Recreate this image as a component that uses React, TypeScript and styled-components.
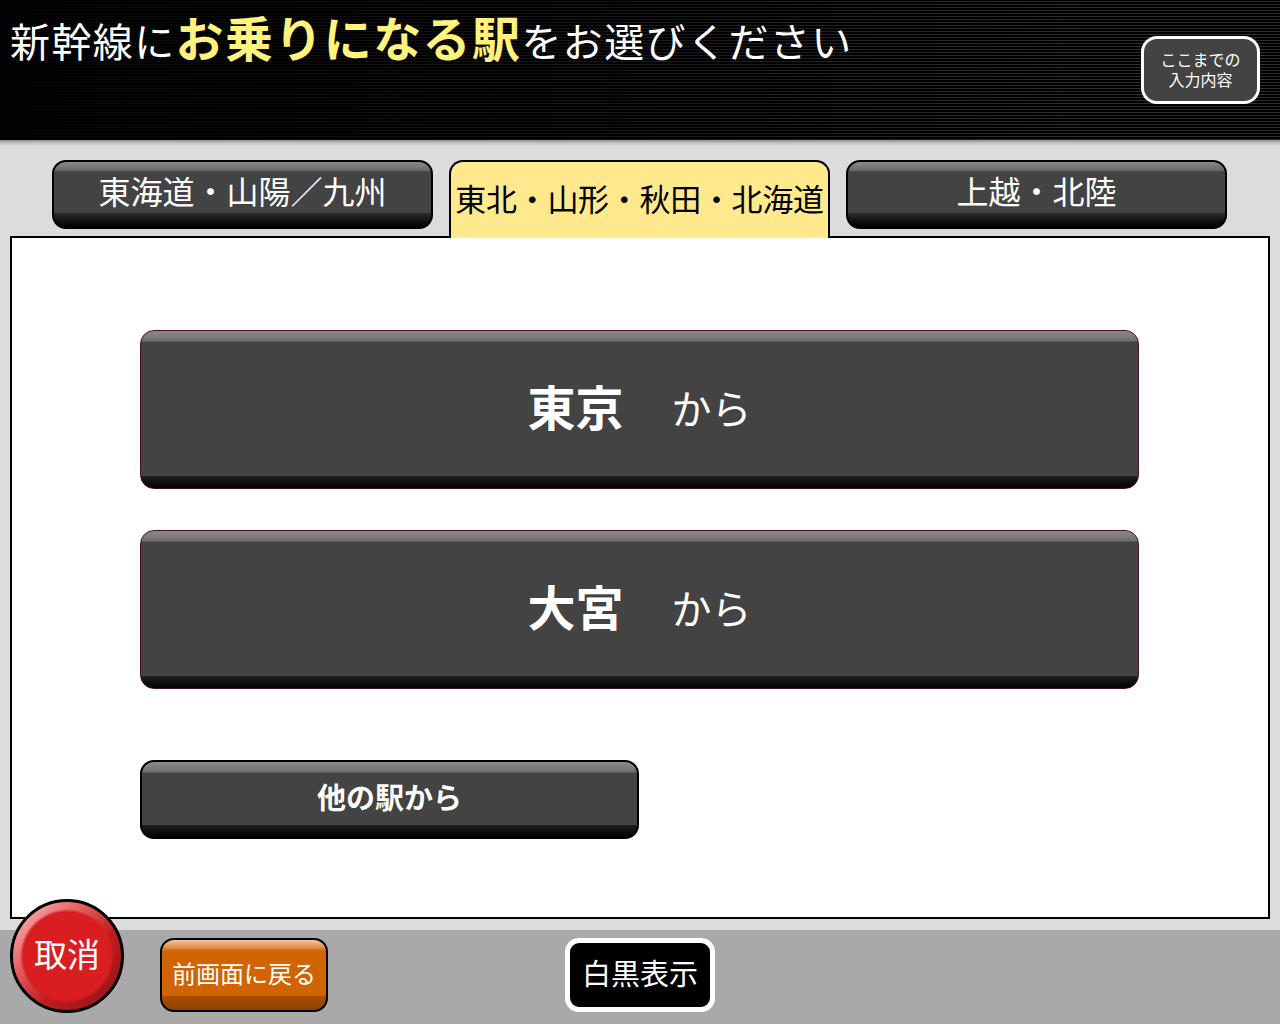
import React from "react";
import styled, { createGlobalStyle } from "styled-components";

const Global = createGlobalStyle`
  html, body { margin: 0; padding: 0; }
  body {
    width: 1280px;
    height: 1024px;
    overflow: hidden;
    font-family: "Noto Sans CJK JP", "Noto Sans", sans-serif;
  }
`;

const Page = styled.div`
  width: 1280px;
  height: 1024px;
  display: flex;
  flex-direction: column;
`;

const Header = styled.header`
  height: 140px;
  flex: none;
  display: flex;
  justify-content: space-between;
  align-items: flex-start;
  padding: 0 20px 0 10px;
  box-sizing: border-box;
  background:
    linear-gradient(to right, rgba(0,0,0,0.92) 0%, rgba(0,0,0,0.55) 45%, rgba(0,0,0,0) 85%),
    repeating-linear-gradient(to bottom, #000 0px, #000 1px, #2e2e2e 1px, #2e2e2e 2px, #000 2px, #000 3px);
`;

const Title = styled.h1`
  margin: 10px 0 0 0;
  font-weight: 400;
  font-size: 40px;
  line-height: 52px;
  color: #ffffff;
  letter-spacing: 1.4px;
  white-space: nowrap;
`;

const Emph = styled.span`
  color: #fff27d;
  font-weight: 700;
  font-size: 48px;
`;

const InfoButton = styled.button`
  margin-top: 36px;
  width: 119px;
  height: 68px;
  box-sizing: border-box;
  border: 3px solid #ffffff;
  border-radius: 16px;
  background: #434343;
  color: #ffffff;
  font-family: inherit;
  padding: 0 0 3px 0;
  display: flex;
  flex-direction: column;
  justify-content: center;
  align-items: center;
`;

const InfoLine = styled.span`
  display: block;
  font-size: 16px;
  line-height: 20px;
  height: 20px;
`;

const Main = styled.main`
  flex: 1;
  display: flex;
  flex-direction: column;
  background: linear-gradient(to bottom, #8e8e8e 0px, #c4c4c4 3px, #dcdcdc 6px, #dcdcdc 100%);
  padding: 20px 10px 11px 10px;
`;

const TabRow = styled.div`
  display: flex;
  align-items: flex-start;
  gap: 16px;
  padding-left: 42px;
  height: 76px;
`;

const Tab = styled.div<{ $active?: boolean }>`
  width: 381px;
  box-sizing: border-box;
  display: flex;
  justify-content: center;
  align-items: center;
  position: relative;
  z-index: 1;
  white-space: nowrap;
  ${(p) =>
    p.$active
      ? `
    height: 78px;
    background: #ffe98c;
    border: 2px solid #000;
    border-bottom: none;
    border-radius: 14px 14px 0 0;
    color: #000;
    font-size: 31px;
    padding-bottom: 6px;
    letter-spacing: -0.3px;
  `
      : `
    height: 69px;
    border: 2px solid #000;
    border-radius: 14px;
    color: #fff;
    font-size: 32px;
    padding-bottom: 10px;
    background: linear-gradient(to bottom, #8a8a8a 0px, #6c6c6c 8px, #434343 10px, #434343 calc(100% - 14px), #2a2a2a calc(100% - 14px), #000 100%);
  `}
`;

const Panel = styled.section`
  flex: 1;
  background: #fff;
  border: 2px solid #000;
  display: flex;
  flex-direction: column;
  align-items: flex-start;
  padding: 92px 0 0 128px;
`;

const StationButton = styled.button<{ $small?: boolean }>`
  width: ${(p) => (p.$small ? "499px" : "999px")};
  height: ${(p) => (p.$small ? "79px" : "159px")};
  margin-bottom: ${(p) => (p.$small ? "0" : "41px")};
  box-sizing: border-box;
  border: ${(p) => (p.$small ? "2px solid #000" : "1px solid #4a0f1e")};
  border-radius: 14px;
  padding: 0 0 ${(p) => (p.$small ? "8px" : "10px")} 0;
  color: #fff;
  font-family: inherit;
  display: flex;
  justify-content: center;
  align-items: center;
  gap: 48px;
  background: linear-gradient(
    to bottom,
    #8c8c8c 0px,
    #6e6e6e 10px,
    #434343 11px,
    #434343 calc(100% - 12px),
    #202020 calc(100% - 12px),
    #000 100%
  );
`;

const Spacer = styled.div`
  height: 30px;
`;

const StationName = styled.span<{ $size: number }>`
  font-size: ${(p) => p.$size}px;
  font-weight: 700;
`;

const From = styled.span`
  font-size: 40px;
  font-weight: 400;
  padding-top: 4px;
`;

const Footer = styled.footer`
  height: 94px;
  flex: none;
  background: #a9a9a9;
  display: grid;
  grid-template-columns: 1fr auto 1fr;
  align-items: start;
  padding: 8px 10px 0 10px;
  box-sizing: border-box;
`;

const FooterLeft = styled.div`
  display: flex;
  align-items: flex-start;
  gap: 36px;
`;

const CancelButton = styled.button`
  margin-top: -39px;
  width: 114px;
  height: 114px;
  box-sizing: border-box;
  border-radius: 50%;
  border: 3px solid #000;
  padding: 0 0 6px 0;
  color: #fff;
  font-family: inherit;
  font-size: 33px;
  background:
    radial-gradient(circle at 50% 50%, #d81e20 0px, #d81e20 44px, rgba(216,30,32,0) 47px),
    linear-gradient(135deg, #ffc4c4 0%, #e86a6a 30%, #c21c1e 60%, #8a1214 100%);
  position: relative;
  z-index: 2;
`;

const BackButton = styled.button`
  width: 168px;
  height: 74px;
  box-sizing: border-box;
  border: 2px solid #000;
  border-radius: 14px;
  padding: 0 0 6px 0;
  color: #fff;
  font-family: inherit;
  font-size: 24px;
  background: linear-gradient(
    to bottom,
    #f6c39a 0px,
    #e08a44 8px,
    #d06400 11px,
    #d06400 calc(100% - 14px),
    #a84e00 calc(100% - 14px),
    #8e4000 100%
  );
`;

const MonoButton = styled.button`
  width: 150px;
  height: 74px;
  box-sizing: border-box;
  border: 5px solid #fff;
  border-radius: 14px;
  background: #000;
  color: #fff;
  font-family: inherit;
  font-size: 29px;
  padding: 0 0 6px 0;
`;

export default function App() {
  return (
    <Page>
      <Global />
      <Header>
        <Title>
          新幹線に<Emph>お乗りになる駅</Emph>をお選びください
        </Title>
        <InfoButton>
          <InfoLine>ここまでの</InfoLine>
          <InfoLine>入力内容</InfoLine>
        </InfoButton>
      </Header>
      <Main>
        <TabRow>
          <Tab>東海道・山陽／九州</Tab>
          <Tab $active>東北・山形・秋田・北海道</Tab>
          <Tab>上越・北陸</Tab>
        </TabRow>
        <Panel>
          <StationButton>
            <StationName $size={48}>東京</StationName>
            <From>から</From>
          </StationButton>
          <StationButton>
            <StationName $size={48}>大宮</StationName>
            <From>から</From>
          </StationButton>
          <Spacer />
          <StationButton $small>
            <StationName $size={29}>他の駅から</StationName>
          </StationButton>
        </Panel>
      </Main>
      <Footer>
        <FooterLeft>
          <CancelButton>取消</CancelButton>
          <BackButton>前画面に戻る</BackButton>
        </FooterLeft>
        <MonoButton>白黒表示</MonoButton>
        <div />
      </Footer>
    </Page>
  );
}
